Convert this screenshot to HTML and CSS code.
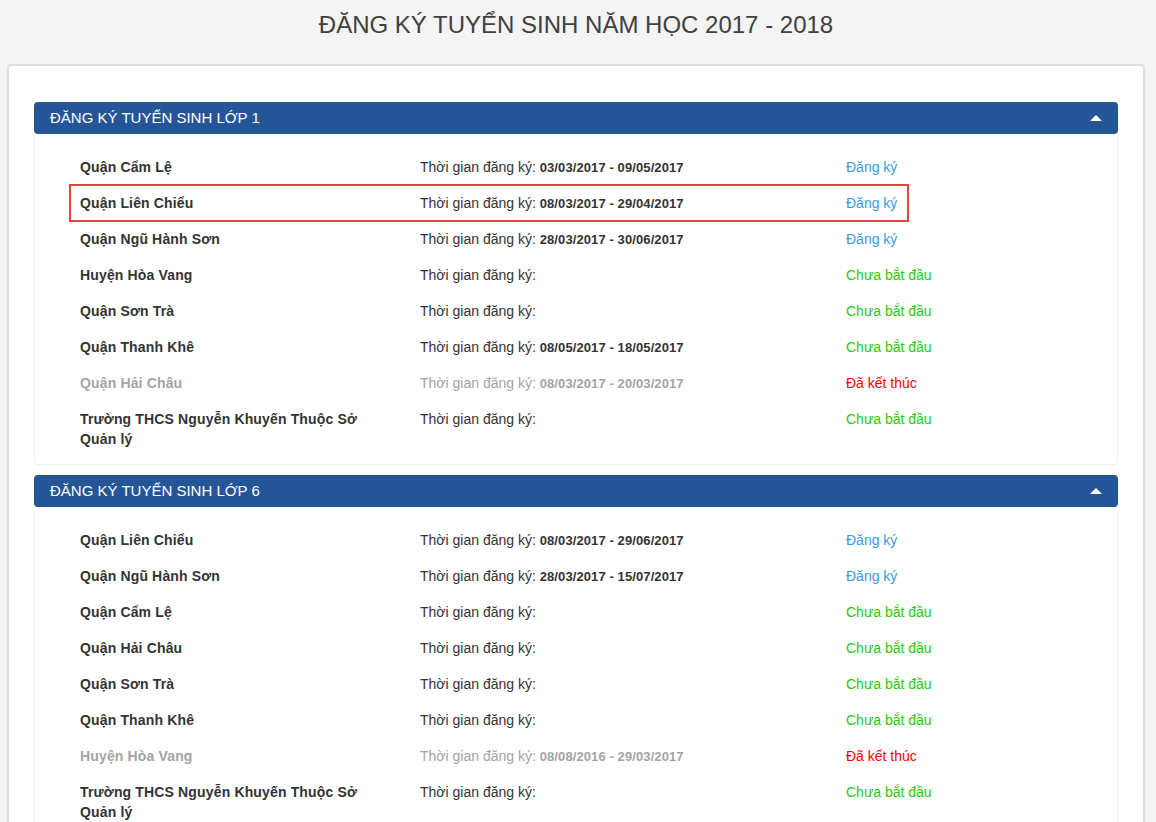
FILE: index.html
```html
<!DOCTYPE html>
<html lang="vi">
<head>
<meta charset="utf-8">
<title>Đăng ký tuyển sinh</title>
<link rel="stylesheet" href="styles.css">
</head>
<body>
<h1 class="page-title">ĐĂNG KÝ TUYỂN SINH NĂM HỌC 2017 - 2018</h1>
<div class="card">
  <section class="panel">
    <div class="panel-heading"><span>ĐĂNG KÝ TUYỂN SINH LỚP 1</span><span class="caret"></span></div>
    <div class="panel-body">
      <div class="row"><div class="name">Quận Cẩm Lệ</div><div class="time">Thời gian đăng ký: <b>03/03/2017 - 09/05/2017</b></div><div class="status open">Đăng ký</div></div>
      <div class="row marked"><div class="name">Quận Liên Chiểu</div><div class="time">Thời gian đăng ký: <b>08/03/2017 - 29/04/2017</b></div><div class="status open">Đăng ký</div></div>
      <div class="row"><div class="name">Quận Ngũ Hành Sơn</div><div class="time">Thời gian đăng ký: <b>28/03/2017 - 30/06/2017</b></div><div class="status open">Đăng ký</div></div>
      <div class="row"><div class="name">Huyện Hòa Vang</div><div class="time">Thời gian đăng ký:</div><div class="status wait">Chưa bắt đầu</div></div>
      <div class="row"><div class="name">Quận Sơn Trà</div><div class="time">Thời gian đăng ký:</div><div class="status wait">Chưa bắt đầu</div></div>
      <div class="row"><div class="name">Quận Thanh Khê</div><div class="time">Thời gian đăng ký: <b>08/05/2017 - 18/05/2017</b></div><div class="status wait">Chưa bắt đầu</div></div>
      <div class="row ended"><div class="name">Quận Hải Châu</div><div class="time">Thời gian đăng ký: <b>08/03/2017 - 20/03/2017</b></div><div class="status closed">Đã kết thúc</div></div>
      <div class="row"><div class="name">Trường THCS Nguyễn Khuyến Thuộc Sở Quản lý</div><div class="time">Thời gian đăng ký:</div><div class="status wait">Chưa bắt đầu</div></div>
    </div>
  </section>
  <section class="panel">
    <div class="panel-heading"><span>ĐĂNG KÝ TUYỂN SINH LỚP 6</span><span class="caret"></span></div>
    <div class="panel-body">
      <div class="row"><div class="name">Quận Liên Chiểu</div><div class="time">Thời gian đăng ký: <b>08/03/2017 - 29/06/2017</b></div><div class="status open">Đăng ký</div></div>
      <div class="row"><div class="name">Quận Ngũ Hành Sơn</div><div class="time">Thời gian đăng ký: <b>28/03/2017 - 15/07/2017</b></div><div class="status open">Đăng ký</div></div>
      <div class="row"><div class="name">Quận Cẩm Lệ</div><div class="time">Thời gian đăng ký:</div><div class="status wait">Chưa bắt đầu</div></div>
      <div class="row"><div class="name">Quận Hải Châu</div><div class="time">Thời gian đăng ký:</div><div class="status wait">Chưa bắt đầu</div></div>
      <div class="row"><div class="name">Quận Sơn Trà</div><div class="time">Thời gian đăng ký:</div><div class="status wait">Chưa bắt đầu</div></div>
      <div class="row"><div class="name">Quận Thanh Khê</div><div class="time">Thời gian đăng ký:</div><div class="status wait">Chưa bắt đầu</div></div>
      <div class="row ended"><div class="name">Huyện Hòa Vang</div><div class="time">Thời gian đăng ký: <b>08/08/2016 - 29/03/2017</b></div><div class="status closed">Đã kết thúc</div></div>
      <div class="row"><div class="name">Trường THCS Nguyễn Khuyến Thuộc Sở Quản lý</div><div class="time">Thời gian đăng ký:</div><div class="status wait">Chưa bắt đầu</div></div>
    </div>
  </section>
</div>
</body>
</html>
```
FILE: styles.css
```css
html, body {
  margin: 0;
  padding: 0;
}
body {
  background: #f4f4f4;
  font-family: "Liberation Sans", Arial, sans-serif;
  font-size: 14px;
  color: #333;
}
.page-title {
  margin: 0;
  height: 64px;
  box-sizing: border-box;
  padding: 11px 4px 0 0;
  text-align: center;
  font-size: 24px;
  line-height: 28px;
  font-weight: normal;
  color: #404040;
}
.card {
  margin: 0 11px 0 7px;
  background: #fff;
  border: 2px solid #dedede;
  border-radius: 4px;
  padding: 36px 25px 20px;
}
.panel {
  margin-bottom: 10px;
}
.panel-heading {
  height: 32px;
  box-sizing: border-box;
  background: #245697;
  color: #fff;
  border-radius: 4px;
  padding: 0 16px 1px;
  display: flex;
  align-items: center;
  justify-content: space-between;
  font-size: 15px;
}
.caret {
  width: 0;
  height: 0;
  border-left: 6px solid transparent;
  border-right: 6px solid transparent;
  border-bottom: 6px solid #fff;
}
.panel-body {
  border: 1px solid #f1f1f1;
  border-top: none;
  border-radius: 0 0 4px 4px;
  padding: 15px 0 7px;
}
.row {
  display: grid;
  grid-template-columns: 340px 426px 72px;
  width: 838px;
  margin-left: 35px;
  padding: 8px 0;
  line-height: 20px;
  height: auto;
}
.row > div {
  padding-left: 10px;
}
.name {
  font-weight: bold;
  letter-spacing: 0.15px;
  padding-right: 40px;
}
.time b {
  font-weight: bold;
  font-size: 13px;
  line-height: 1;
  letter-spacing: 0.1px;
}
.status {
  white-space: nowrap;
}
.status.open { color: #3a9be0; }
.status.wait { color: #27cc0a; }
.status.closed { color: #ff0000; }
.row.ended .name,
.row.ended .time {
  color: #a4a4a4;
}
.row.marked {
  outline: 2px solid #e4453f;
  outline-offset: -1px;
}
```
